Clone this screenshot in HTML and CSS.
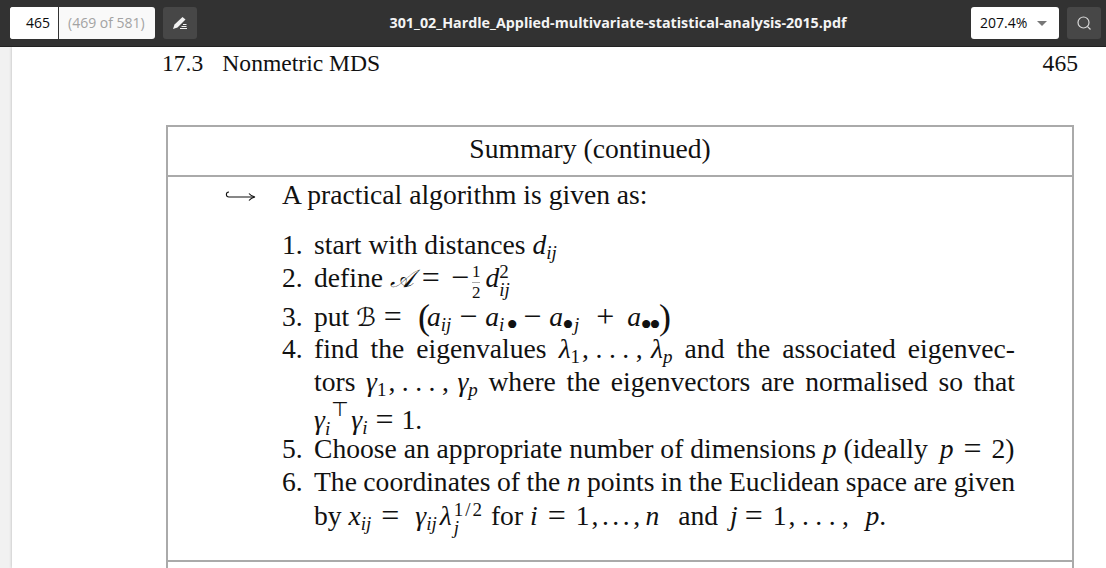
FILE: index.html
```html
<!DOCTYPE html>
<html>
<head>
	<title>301_02_Hardle_Applied-multivariate-statistical-analysis-2015.pdf</title>
	<meta charset="utf-8">
	<link rel="stylesheet" href="styles.css">
</head>
<body>
<div class="toolbar">
	<div class="pager">
		<span class="page-num">465</span>
		<span class="page-of">(469 of 581)</span>
	</div>
	<button class="tool-btn pen-btn">
		<svg width="16" height="16" viewBox="0 0 16 16"><path d="M1 14 L2.5 9.5 L10.5 2 L13.5 4.5 L5.5 12.5 Z" fill="#f2f2f2"/><path d="M8 13.5h7M9.5 11.5h5M11 9.5h3.5" stroke="#f2f2f2" stroke-width="1"/></svg>
	</button>
	<div class="doc-title">301_02_Hardle_Applied-multivariate-statistical-analysis-2015.pdf</div>
	<div class="zoom-select">207.4%<i class="caret"></i></div>
	<button class="tool-btn search-btn">
		<svg width="18" height="18" viewBox="0 0 18 18" fill="none" stroke="#d8d8d8" stroke-width="1.2"><circle cx="8.5" cy="8.5" r="5.5"/><path d="M12.6 12.6 L15.5 15.5"/></svg>
	</button>
</div>
<div class="viewer">
	<div class="page">
		<div class="running-head">
			<span><span class="sec-no">17.3</span>Nonmetric MDS</span>
			<span>465</span>
		</div>
		<div class="box">
			<div class="box-title">Summary (continued)</div>
			<div class="box-body">
				<div class="lead">
					<span class="hook"><svg width="32" height="16" viewBox="0 0 32 16" fill="none" stroke="#111" stroke-width="1.1"><path d="M5 5 C1.5 5 1.5 10 5 10 L30 10"/><path d="M25 6.5 C26.5 8.5 28 9.5 31 10 C28 10.5 26.5 11.5 25 13.5"/></svg></span>
					<span>A practical algorithm is given as:</span>
				</div>
				<ol class="steps">
					<li class="step"><span class="no">1.</span><span class="txt">start with distances <i>d<sub>ij</sub></i></span></li>
					<li class="step"><span class="no">2.</span><span class="txt">define <span class="script">𝒜</span><span class="op">=</span><span class="minus">−</span><span class="frac"><span>1</span><span>2</span></span><i>d</i><span class="scripts"><span>2</span><i>ij</i></span></span></li>
					<li class="step step-tall"><span class="no">3.</span><span class="txt">put <span class="script">ℬ</span><span class="op">=</span><span class="paren">(</span><i>a<sub>ij</sub></i><span class="op">−</span><i>a<sub class="sub-i">i</sub></i><span class="dot">•</span><span class="op">−</span><i>a</i><span class="dot">•</span><i class="low">j</i><span class="op op-plus">+</span><i>a</i><span class="dot">••</span><span class="paren">)</span></span></li>
					<li class="step"><span class="no">4.</span><span class="txt just">find the eigenvalues <span class="nb"><i>λ</i><sub>1</sub><span class="dots dots-wide">,...,</span><i>λ<sub>p</sub></i></span> and the associated eigenvec-</span></li>
					<li class="step"><span class="no"></span><span class="txt just">tors <span class="nb"><i>γ</i><sub>1</sub><span class="dots dots-wide">,...,</span><i>γ<sub>p</sub></i></span> where the eigenvectors are normalised so that</span></li>
					<li class="step"><span class="no"></span><span class="txt"><i>γ</i><span class="scripts scripts-t"><span class="top">⊤</span><i>i</i></span><i>γ<sub>i</sub></i><span class="op">=</span>1.</span></li>
					<li class="step"><span class="no">5.</span><span class="txt">Choose an appropriate number of dimensions <i>p</i> (ideally <i class="pad">p</i><span class="op op-wide">=</span>2)</span></li>
					<li class="step"><span class="no">6.</span><span class="txt just tight">The coordinates of the <i>n</i> points in the Euclidean space are given</span></li>
					<li class="step"><span class="no"></span><span class="txt">by <i>x<sub>ij</sub></i><span class="op op-eq">=</span><i>γ<sub>ij</sub></i><i class="lam">λ</i><span class="scripts scripts-half"><span>1/2</span><i>j</i></span> for <i>i</i><span class="op op-wide">=</span>1<span class="dots">,...,</span><i class="after-n">n</i> and <i class="pad">j</i><span class="op op-narrow">=</span>1<span class="dots dots-wide">,...,</span><i class="pad-p">p</i>.</span></li>
				</ol>
			</div>
			<div class="box-foot"></div>
		</div>
	</div>
</div>
</body>
</html>
```

FILE: styles.css
```css
*{
	margin: 0;
	padding: 0;
	box-sizing: border-box;
}
html,body{
	height: 100%;
	overflow: hidden;
}
body{
	background: #f1f1f1;
	font-family: "Liberation Serif", serif;
	color: #111;
}
.toolbar{
	height: 47px;
	background: #323232;
	border-bottom: 1px solid #222;
	display: flex;
	align-items: center;
	padding: 0 5px 1px 10px;
	font-family: "Open Sans", sans-serif;
	font-size: 14px;
}
.pager{
	width: 145px;
	height: 32px;
	display: flex;
	border-radius: 3px;
	overflow: hidden;
	background: #f9f9f9;
}
.page-num{
	width: 49px;
	background: #fff;
	border-right: 1px solid #333;
	color: #0c0c0d;
	text-align: right;
	padding-right: 8px;
	line-height: 32px;
}
.page-of{
	color: #a3a3a3;
	padding-left: 9px;
	line-height: 32px;
}
.tool-btn{
	width: 34px;
	height: 32px;
	background: #474747;
	border: 0;
	border-radius: 3px;
	display: flex;
	align-items: center;
	justify-content: center;
}
.pen-btn{
	margin-left: 8px;
}
.doc-title{
	flex: 1;
	text-align: center;
	color: #f4f4f4;
	font-weight: 700;
	font-size: 14.3px;
	padding-left: 68px;
	white-space: nowrap;
}
.zoom-select{
	width: 88px;
	height: 32px;
	background: #fff;
	border-radius: 3px;
	color: #0c0c0d;
	line-height: 32px;
	padding-left: 9px;
	display: flex;
	align-items: center;
	gap: 10px;
}
.caret{
	border-left: 5px solid transparent;
	border-right: 5px solid transparent;
	border-top: 5px solid #777;
	margin-top: 1px;
}
.search-btn{
	margin-left: 8px;
}
.viewer{
	height: 521px;
	padding-left: 12px;
	overflow: hidden;
}
.page{
	height: 521px;
	background: #fff;
	box-shadow: 0 0 3px rgba(0,0,0,.25);
	padding: 0 28px 0 150px;
	font-size: 27.6px;
	line-height: 33px;
	overflow: hidden;
}
.running-head{
	display: flex;
	justify-content: space-between;
	height: 33px;
	font-size: 23.6px;
}
.sec-no{
	margin-right: 19px;
}
.box{
	margin: 45px 4px 0 4px;
	border: 2px solid #aaa;
	border-bottom: 0;
}
.box-title{
	height: 50px;
	border-bottom: 2px solid #aaa;
	text-align: center;
	line-height: 44px;
	padding-right: 60px;
}
.box-body{
	height: 385px;
	border-bottom: 2px solid #aaa;
	padding-left: 56px;
}
.box-foot{
	height: 20px;
}
.lead{
	display: flex;
	height: 36px;
	line-height: 36px;
}
.hook{
	width: 58px;
	display: flex;
	align-items: center;
}
.steps{
	list-style: none;
	margin-top: 15px;
	margin-left: 58px;
	width: 733px;
}
.step{
	display: flex;
	height: 33.4px;
	line-height: 33px;
	white-space: nowrap;
}
.step-tall{
	margin-top: 5.6px;
	margin-bottom: -2px;
}
.no{
	width: 32px;
	flex: none;
}
.txt{
	flex: 1;
}
.just{
	white-space: normal;
	text-align: justify;
	text-align-last: justify;
}
.tight{
	word-spacing: -1.5px;
}
.nb{
	white-space: nowrap;
}
.dots{
	letter-spacing: 3.5px;
	margin: 0 2px;
}
.dots-wide{
	letter-spacing: 6.5px;
}
sub,.low{
	font-size: 19px;
	line-height: 0;
	vertical-align: -5px;
}
.low{
	margin-left: 3px;
}
.sub-i{
	margin-right: 3px;
}
.script{
	font-family: "DejaVu Sans", serif;
	font-style: italic;
	font-size: 25px;
}
.op{
	font-size: 32px;
	line-height: 0;
	margin: 0 8px;
	vertical-align: -1px;
}
.op-wide{
	margin: 0 10px;
}
.op-narrow{
	margin: 0 10px 0 7px;
}
.op-eq{
	margin: 0 16px 0 10px;
}
.op-plus{
	margin: 0 13px 0 17px;
}
.minus{
	font-size: 32px;
	line-height: 0;
	vertical-align: -1px;
	margin-left: 3px;
	margin-right: 3px;
}
.pad{
	margin-left: 5px;
}
.pad-p{
	margin-left: 8px;
}
.lam{
	margin-left: 3px;
}
.after-n{
	margin-right: 12px;
}
.frac{
	display: inline-flex;
	flex-direction: column;
	font-size: 17px;
	line-height: 20px;
	vertical-align: 10px;
	text-align: center;
	margin-right: 5px;
}
.frac span:first-child{
	border-bottom: 1px solid #aaa;
}
.scripts{
	display: inline-flex;
	flex-direction: column;
	font-size: 19px;
	line-height: 18px;
	vertical-align: 9px;
}
.scripts-half{
	letter-spacing: 2px;
	margin-left: 2px;
}
.scripts-t{
	line-height: 20px;
	margin-right: 3px;
	vertical-align: 13px;
}
.scripts-t .top{
	font-family: "DejaVu Sans", serif;
	font-size: 20px;
	margin-left: 6px;
}
.dot{
	font-size: 34px;
	line-height: 0;
	vertical-align: -10px;
	letter-spacing: -3px;
	margin-left: -1px;
}
.paren{
	font-size: 36px;
	line-height: 0;
	vertical-align: -3px;
	margin: 0 1px;
}
.op + .paren{
	margin: 0 -3px 0 8px;
}
```
